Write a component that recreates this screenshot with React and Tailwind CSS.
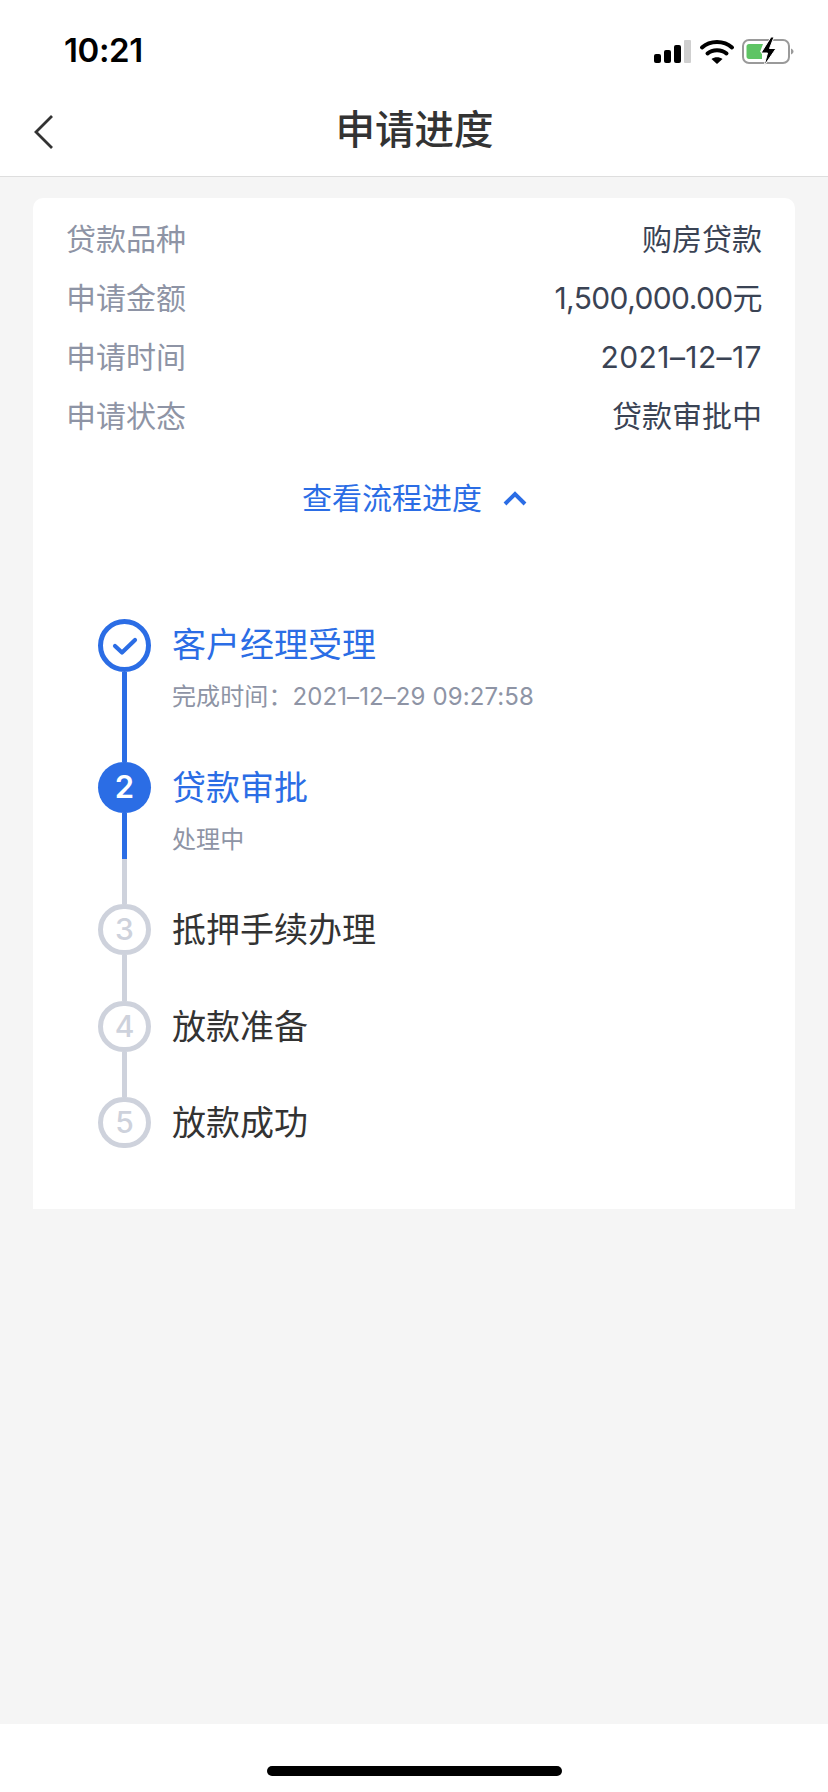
const FONT = "font-['Inter','Noto_Sans_CJK_SC',sans-serif]";

function StatusIcons() {
  return (
    <svg width="140" height="30" viewBox="0 0 140 30" className="block">
      <rect x="0" y="17" width="7" height="9" rx="2" fill="#000" />
      <rect x="10" y="13" width="7" height="13" rx="2" fill="#000" />
      <rect x="20" y="8" width="7" height="18" rx="2" fill="#000" />
      <rect x="30" y="3" width="7" height="23" rx="1" fill="#cfcfcf" />
      <path d="M48 10.5C56 3 70 3 78 10.5" fill="none" stroke="#000" strokeWidth="4" strokeLinecap="round" />
      <path d="M53.5 16.5C58.5 12 67.5 12 72.5 16.5" fill="none" stroke="#000" strokeWidth="4" strokeLinecap="round" />
      <path d="M57.5 22L63 27L68.5 22C65.5 19.6 60.5 19.6 57.5 22Z" fill="#000" />
      <rect x="89" y="3" width="46" height="23" rx="6" fill="none" stroke="#9a9a9a" strokeWidth="2" />
      <path d="M95 7H109L106 15H108V22H95C93.5 22 92.5 21 92.5 19.5V9.5C92.5 8 93.5 7 95 7Z" fill="#5ec464" />
      <path d="M137 11.5C139 12.5 139.5 13.5 139.5 14.5C139.5 15.5 139 16.5 137 17.5Z" fill="#9a9a9a" />
      <path d="M117 0L107 16H113.5L110 29L122 11.5H115.5L120 0Z" fill="#000" stroke="#fff" strokeWidth="1" />
    </svg>
  );
}

function Row({ label, value, tracking = "" }) {
  return (
    <div className="flex h-[59px] items-center justify-between text-[30px]">
      <span className="text-[#8e94a5]">{label}</span>
      <span className={`${tracking} text-[#3a4354]`}>{value}</span>
    </div>
  );
}

function Step({ title, sub, height, state, number, line }) {
  const blue = state !== "todo";
  return (
    <div className="flex" style={{ height }}>
      <div className="flex w-[53px] shrink-0 flex-col items-center">
        {state === "done" && (
          <div className="flex h-[53px] w-[53px] shrink-0 items-center justify-center rounded-full border-[5px] border-[#2b6de5] bg-white">
            <svg width="26" height="20" viewBox="0 0 26 20">
              <path d="M3 10L10 16.5L23 4" fill="none" stroke="#2b6de5" strokeWidth="4.2" strokeLinecap="round" strokeLinejoin="round" />
            </svg>
          </div>
        )}
        {state === "active" && (
          <div className="flex h-[51px] w-[53px] shrink-0 items-center justify-center rounded-full bg-[#2b6de5] text-[31px] font-semibold text-white">
            {number}
          </div>
        )}
        {state === "todo" && (
          <div className="flex h-[51px] w-[53px] shrink-0 items-center justify-center rounded-full border-[5px] border-[#ced2dc] bg-white text-[30px] font-medium text-[#ced2dc]">
            {number}
          </div>
        )}
        {line === "blue" && <div className="w-[5px] flex-1 bg-[#2b6de5]" />}
        {line === "mixed" && (
          <div className="flex w-[5px] flex-1 flex-col">
            <div className="h-[46px] bg-[#2b6de5]" />
            <div className="flex-1 bg-[#ced2dc]" />
          </div>
        )}
        {line === "grey" && <div className="w-[5px] flex-1 bg-[#ced2dc]" />}
      </div>
      <div className="ml-[21px] min-w-0 flex-1">
        <div className={`flex h-[51px] items-center text-[34px] ${blue ? "text-[#2b6de5]" : "text-[#333333]"}`}>
          {title}
        </div>
        {sub && <div className="mt-[10px] text-[24px] leading-[34px] tracking-[0.1px] text-[#8e94a5]">{sub}</div>}
      </div>
    </div>
  );
}

export default function App() {
  return (
    <div className={`${FONT} flex min-h-[1792px] w-[828px] flex-col bg-[#f5f5f5]`}>
      <header className="h-[177px] shrink-0 border-b border-[#dedede] bg-white">
        <div className="flex h-[88px] items-start justify-between pl-[64px] pr-[34px] pt-[31px]">
          <span className="text-[33px] font-semibold leading-[38px] tracking-[-0.4px] text-black">10:21</span>
          <div className="ml-auto mt-[6px]">
            <StatusIcons />
          </div>
        </div>
        <div className="relative flex h-[88px] items-center justify-center">
          <svg width="22" height="36" viewBox="0 0 22 36" className="absolute left-[33px] top-[26px]">
            <path d="M19 2L3 18L19 34" fill="none" stroke="#333333" strokeWidth="2.8" />
          </svg>
          <h1 className="mb-[2px] pl-[1px] text-[39.5px] font-medium leading-none text-[#333333]">申请进度</h1>
        </div>
      </header>

      <main className="flex-1 px-[33px] pt-[21px]">
        <section className="h-[1011px] rounded-t-[10px] bg-white pl-[33px] pr-[33px] pt-[12px]">
          <Row label="贷款品种" value="购房贷款" />
          <Row label="申请金额" value="1,500,000.00元" tracking="tracking-[-0.6px]" />
          <Row label="申请时间" value="2021–12–17" tracking="tracking-[0.4px]" />
          <Row label="申请状态" value="贷款审批中" />
          <div className="mt-[22px] flex h-[60px] items-center justify-center pl-[2px] text-[30px] text-[#2b6de5]">
            <span>查看流程进度</span>
            <svg width="26" height="18" viewBox="0 0 26 18" className="ml-[20px]">
              <path d="M3 15L13 5L23 15" fill="none" stroke="#2b6de5" strokeWidth="4" />
            </svg>
          </div>
          <div className="ml-[32px] mt-[91px]">
            <Step state="done" title="客户经理受理" sub="完成时间：2021–12–29 09:27:58" height={143} line="blue" />
            <Step state="active" number="2" title="贷款审批" sub="处理中" height={142} line="mixed" />
            <Step state="todo" number="3" title="抵押手续办理" height={97} line="grey" />
            <Step state="todo" number="4" title="放款准备" height={96} line="grey" />
            <Step state="todo" number="5" title="放款成功" height={51} />
          </div>
        </section>
      </main>

      <footer className="flex h-[68px] shrink-0 justify-center bg-white pt-[42px]">
        <div className="h-[10px] w-[295px] rounded-full bg-black" />
      </footer>
    </div>
  );
}
